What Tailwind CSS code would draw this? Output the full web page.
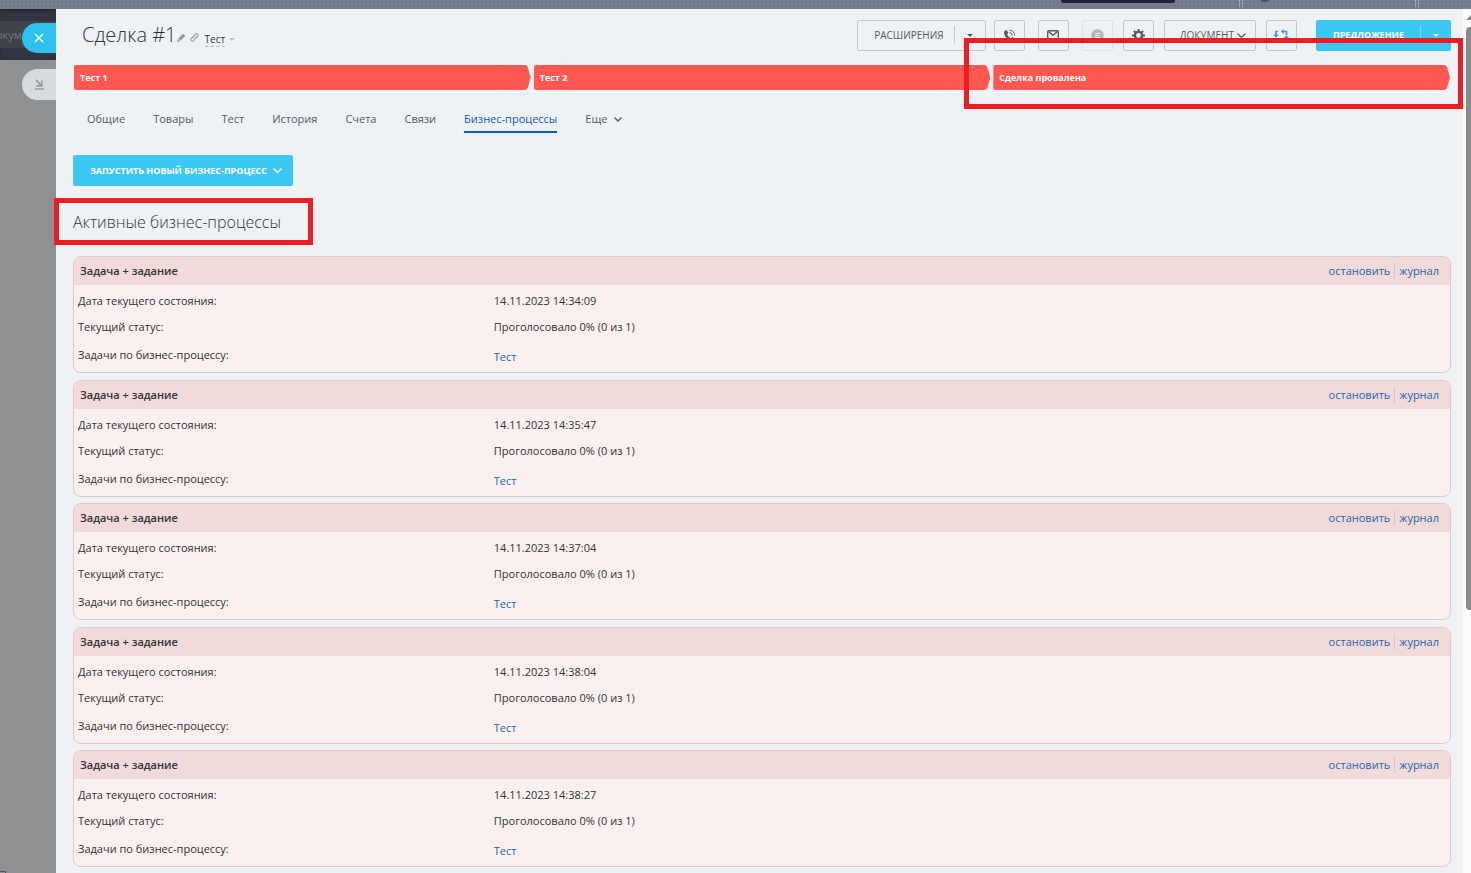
<!DOCTYPE html>
<html lang="ru">
<head>
<meta charset="utf-8">
<meta name="viewport" content="width=device-width, initial-scale=1">
<title>Сделка #1</title>
<script src="https://cdn.jsdelivr.net/npm/@tailwindcss/browser@4"></script>
</head>
<body class="flex h-screen flex-col overflow-hidden bg-[#8e9091] font-['Open_Sans','Noto_Sans',sans-serif] text-[11px] leading-4 text-[#333]">
<div class="relative h-[9px] shrink-0 bg-[#747e8c] bg-[radial-gradient(#6d7785_1px,transparent_1px)] bg-size-[4px_4px]">
  <div class="absolute top-0 left-[72.1%] h-[3px] w-[114px] rounded-b-sm bg-[#1f2430]"></div>
  <div class="absolute top-0 left-[84.2%] h-[7px] w-[4px] border-x border-dotted border-[#c5cad1]"></div>
  <div class="absolute -top-3 left-[85.5%] size-3.5 rounded-full bg-[#4a4d52]"></div>
  <div class="absolute top-0 left-[96.2%] h-[7px] w-[4px] border-x border-dotted border-[#c5cad1]"></div>
</div>
<div class="flex min-h-0 flex-1">
  <aside class="relative w-14 shrink-0">
    <div class="h-[51px] bg-[#31353f] pt-3 shadow-[inset_0_2px_2px_#22252c]">
      <div class="h-[27px] overflow-hidden bg-[#3f434b] leading-[27px] text-[#777a80]"><div class="-ml-1">окум</div></div>
    </div>
    <button aria-label="Закрыть" class="absolute top-[14px] right-0 flex h-[30px] w-[34px] items-center rounded-l-full bg-[#2fc1f0] pl-3">
      <svg class="size-[10px]" viewBox="0 0 10 10" fill="none" stroke="#fff" stroke-width="1.3"><path d="M1 1l8 8M9 1l-8 8"/></svg>
    </button>
    <button aria-label="Свернуть" class="absolute top-[60px] right-0 flex h-[31px] w-[34px] items-center rounded-l-full bg-[#d8dbde] pl-3">
      <svg class="size-[11px]" viewBox="0 0 11 12" fill="none" stroke="#9298a1" stroke-width="1.7"><path d="M1.5 1l6 6M8 1.500V7.500H2M.5 11h10"/></svg>
    </button>
    <div class="absolute bottom-0 left-0 h-0.5 w-1.5 border-t border-r border-[#4c4f55]"></div>
  </aside>

  <main class="relative min-w-0 flex-1 bg-[#eef2f4] pt-2.5 pr-3 pl-[17px]">
    <header class="flex items-center pl-[9px]">
      <h1 class="text-xl leading-8 font-light text-[#333]">Сделка #1</h1>
      <svg class="mt-1 size-[9px] shrink-0" viewBox="0 0 8 8" fill="#8f959d"><path d="M0 8l.7-2.6L2.600 7.300zM1.200 4.800L5.300.7 7.300 2.700 3.200 6.800z"/></svg>
      <svg class="mt-1 ml-1 size-[9px] shrink-0" viewBox="0 0 9 9" fill="none" stroke="#9ba1a9" stroke-width="1.100"><path d="M3.500 5.500a1.600 1.600 0 0 1 0-2.200L5.300 1.300a1.600 1.600 0 0 1 2.400 2.300L6.300 5M5.400 3.500a1.600 1.600 0 0 1 0 2.200L3.700 7.600A1.600 1.600 0 0 1 1.300 5.400L2.600 4"/></svg>
      <button class="mt-2 ml-1.5 flex items-center gap-1 text-[10px]"><span class="border-b border-dashed border-[#b8bec5] leading-[14px]">Тест</span><span class="border-x-3 border-t-3 border-x-transparent border-t-[#bcc1c6]"></span></button>

      <div class="ml-auto flex h-[31px] items-center rounded-xs border border-[#c2c9ce] text-[#535c69]">
        <button class="pr-2.5 pl-4 text-[10px]">РАСШИРЕНИЯ</button>
        <button aria-label="Другие расширения" class="flex h-[18px] w-[31px] items-center justify-center border-l border-[#c2c9ce]"><span class="border-x-3 border-t-3 border-x-transparent border-t-[#535c69]"></span></button>
      </div>
      <button aria-label="Позвонить" class="ml-2 flex size-[31px] items-center justify-center rounded-xs border border-[#c2c9ce]">
        <svg class="size-[13px]" viewBox="0 0 13 13" fill="none" stroke="#535c69"><path d="M2.600 1.500L1 2.600C.6 7.200 5.500 12.700 10.300 12L11.800 10.500 9.300 8 7.600 9.200C6.200 8.400 4.700 6.700 4.200 5.400L5.200 3.800 3.600 1z" fill="#535c69" stroke="none"/><path d="M6.300 3.600a3 3 0 0 1 3 3M6.500 1.200a5.200 5.200 0 0 1 5.200 5.200"/></svg>
      </button>
      <button aria-label="Письмо" class="ml-[13px] flex size-[31px] items-center justify-center rounded-xs border border-[#c2c9ce]">
        <svg class="h-[10px] w-3" viewBox="0 0 12 10" fill="none" stroke="#535c69" stroke-width="1.400"><rect x=".7" y=".7" width="10.600" height="8.600" rx=".8"/><path d="M1.500 1.500L6 5.300l4.500-3.800"/></svg>
      </button>
      <button aria-label="Чат" disabled class="ml-[13px] flex size-[31px] items-center justify-center rounded-xs border border-[#dfe3e6]">
        <svg class="size-[13px]" viewBox="0 0 13 13"><path d="M6.500.3a6.200 6.200 0 1 1 0 12.400H1.300V10A6.200 6.200 0 0 1 6.500.3z" fill="#b3b7bc"/><path d="M4 4.500h5.500M4 6.500h4M4 8.500h5.500" stroke="#eef2f4"/></svg>
      </button>
      <button aria-label="Настройки" class="ml-[10px] flex size-[31px] items-center justify-center rounded-xs border border-[#c2c9ce]">
        <svg class="size-[13px]" viewBox="0 0 13 13" fill="none" stroke="#535c69"><circle cx="6.500" cy="6.500" r="3.600" stroke-width="2.400"/><path d="M6.500 0v2.500M6.500 10.500V13M0 6.500h2.500M10.500 6.500H13M1.900 1.900l1.800 1.800M9.300 9.300l1.800 1.800M1.900 11.100l1.800-1.800M9.300 3.700l1.800-1.800" stroke-width="2"/></svg>
      </button>
      <button class="ml-[10px] flex h-[31px] items-center gap-[3px] rounded-xs border border-[#c2c9ce] pr-[9px] pl-[15px] text-[10px] text-[#535c69]">ДОКУМЕНТ
        <svg class="h-[5px] w-[9px]" viewBox="0 0 9 5" fill="none" stroke="#535c69" stroke-width="1.200"><path d="M.5.5l4 4 4-4"/></svg>
      </button>
      <button aria-label="Роботы" class="ml-[10px] flex size-[31px] items-center justify-center rounded-xs border border-[#c2c9ce]">
        <svg class="h-[13px] w-4" viewBox="0 0 16 13" fill="none" stroke="#4d93ea" stroke-width="1.700"><path d="M5 2.500H3v4M9 2.500h4.500V6M4 11.500h3M13.500 8v3.500H10"/><path d="M0 5.500h6L3 8.800zM10.800 0v5L7.800 2.500zM10.800 9h5.200l-2.600-2.800z" fill="#4d93ea" stroke="none"/></svg>
      </button>
      <div class="ml-[19px] flex h-[31px] items-center rounded-xs bg-[#3bc8f5] font-bold text-white">
        <button class="pr-4 pl-[17px] text-[9px]">ПРЕДЛОЖЕНИЕ</button>
        <button aria-label="Другие действия" class="flex h-[18px] w-[31px] items-center justify-center border-l border-[#7bdaf8]"><span class="border-x-3 border-t-3 border-x-transparent border-t-white"></span></button>
      </div>
    </header>

    <div class="mt-3.5 flex gap-[3px] px-px text-[9px] leading-[25px] font-bold text-white">
      <div class="flex-1 rounded-l-xs bg-[#ff5752] pl-1.5 [clip-path:polygon(0_0,calc(100%-5px)_0,calc(100%-3px)_2px,100%_50%,calc(100%-3px)_calc(100%-2px),calc(100%-5px)_100%,0_100%)]">Тест 1</div>
      <div class="flex-1 rounded-l-xs bg-[#ff5752] pl-1.5 [clip-path:polygon(0_0,calc(100%-5px)_0,calc(100%-3px)_2px,100%_50%,calc(100%-3px)_calc(100%-2px),calc(100%-5px)_100%,0_100%)]">Тест 2</div>
      <div class="flex-1 rounded-l-xs bg-[#ff5752] pl-1.5 [clip-path:polygon(0_0,calc(100%-5px)_0,calc(100%-3px)_2px,100%_50%,calc(100%-3px)_calc(100%-2px),calc(100%-5px)_100%,0_100%)]">Сделка провалена</div>
    </div>

    <nav class="mt-[21px] flex gap-7 pl-3.5 font-medium text-[#535c69]">
      <a href="#">Общие</a><a href="#">Товары</a><a href="#">Тест</a><a href="#">История</a><a href="#">Счета</a><a href="#">Связи</a>
      <a href="#" class="border-b-2 border-[#1058d0] pb-1 text-[#1058d0]">Бизнес-процессы</a>
      <button class="flex h-4 items-center gap-1.5">Еще <svg class="h-[5px] w-2" viewBox="0 0 8 5" fill="none" stroke="#535c69" stroke-width="1.400"><path d="M.5.5L4 4 7.500.5"/></svg></button>
    </nav>

    <button class="mt-[22px] flex h-[31px] items-center gap-1.5 rounded-xs bg-[#3bc8f5] pr-[11px] pl-[17px] text-[9px] font-bold text-white">ЗАПУСТИТЬ НОВЫЙ БИЗНЕС-ПРОЦЕСС
      <svg class="h-[5px] w-[9px]" viewBox="0 0 9 5" fill="none" stroke="#fff" stroke-width="1.200"><path d="M.5.5l4 4 4-4"/></svg>
    </button>

    <h2 class="mt-6 mb-[22px] text-base leading-6 font-light">Активные бизнес-процессы</h2>

    <div id="list"></div>
    <template id="card">
      <section class="overflow-hidden rounded-lg border border-[#e0c8cc] bg-[#faf0ef] odd:mb-[7px] even:mb-1.5">
        <div class="flex h-7 items-center justify-between bg-[#f2dada] pr-[11px] pl-1.5">
          <h3 class="font-semibold">Задача + задание</h3>
          <div class="flex text-[#2067b0]"><a href="#" class="border-r border-[#d0c8cb] pr-1">остановить</a><a href="#" class="pl-1">журнал</a></div>
        </div>
        <table class="mt-[3px] w-full text-left">
          <tbody>
            <tr class="h-[26px]"><th scope="row" class="w-[30%] pl-1 font-normal">Дата текущего состояния:</th><td class="date pl-[7px]"></td></tr>
            <tr class="h-[26px]"><th scope="row" class="pl-1 font-normal">Текущий статус:</th><td class="pl-[7px]">Проголосовало 0% (0 из 1)</td></tr>
            <tr class="h-8 align-top"><th scope="row" class="pt-[7px] pl-1 font-normal">Задачи по бизнес-процессу:</th><td class="pt-[9px] pl-[7px]"><a href="#" class="text-[#2067b0]">Тест</a></td></tr>
          </tbody>
        </table>
      </section>
    </template>

    <div class="pointer-events-none absolute top-[29px] right-0 h-[71px] w-[499px] border-5 border-[#ee1c23]"></div>
    <div class="pointer-events-none absolute top-[189px] -left-0.5 h-[47px] w-[259px] border-5 border-[#ee1c23]"></div>
  </main>
  <div class="flex w-2 shrink-0 flex-col overflow-hidden bg-[#fcfcfc] pl-[3px]">
    <div class="mt-1.5 h-0 w-0 border-x-5 border-b-5 border-x-transparent border-b-[#8b8b8b]"></div>
    <div class="mt-[7px] h-[583px] w-2 rounded-l-sm bg-[#8b8b8b]"></div>
  </div>
</div>
<script>
for (const time of ['14:34:09', '14:35:47', '14:37:04', '14:38:04', '14:38:27']) {
  const card = document.getElementById('card').content.cloneNode(true);
  card.querySelector('.date').textContent = '14.11.2023 ' + time;
  document.getElementById('list').append(card);
}
</script>
</body>
</html>
